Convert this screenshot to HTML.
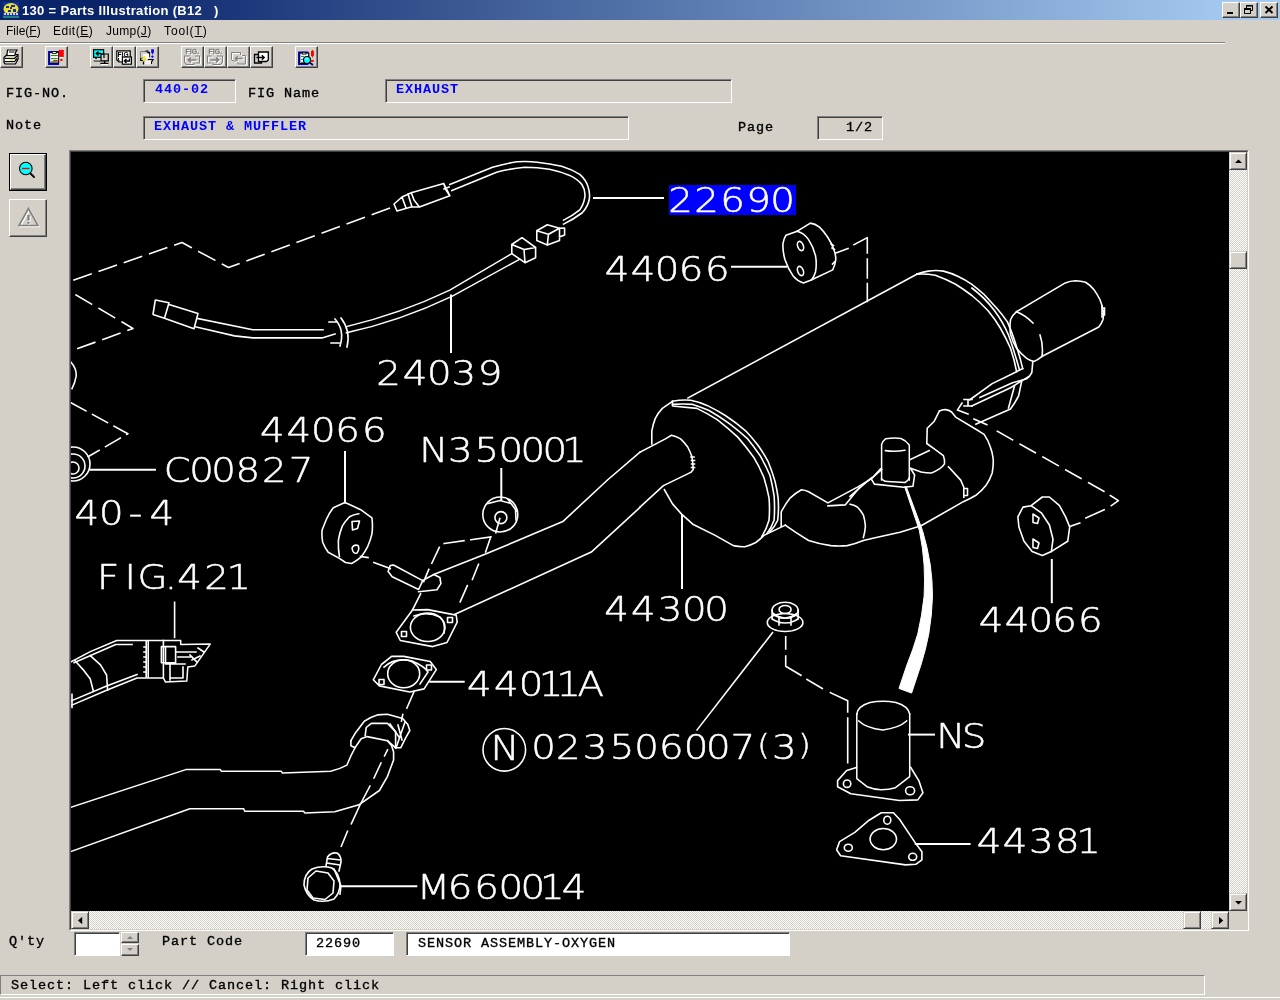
<!DOCTYPE html>
<html lang="en">
<head>
<meta charset="utf-8">
<title>130 = Parts Illustration (B12   )</title>
<style>
html,body{margin:0;padding:0;}
body{width:1280px;height:1000px;overflow:hidden;background:#d4d0c8;position:relative;font-family:"Liberation Sans",sans-serif;font-size:12px;color:#000;}
.abs{position:absolute;}
.lbl,.fld span,.menu,#title .txt,#status span{opacity:0.999;}
.lbl,.fld span,#status span{-webkit-text-stroke:0.35px currentColor;}
.fld.blue span{-webkit-text-stroke:0;}
#title{position:absolute;left:0;top:0;width:1280px;height:20px;background:linear-gradient(to right,#0a246a 0%,#0a246a 8%,#a6caf0 97%,#a6caf0 100%);}
#title .txt{position:absolute;left:22px;top:3px;letter-spacing:0.32px;color:#fff;font-weight:bold;font-size:13px;line-height:16px;white-space:pre;}
.cap{position:absolute;top:2px;width:16px;height:14px;background:#d4d0c8;border:1px solid;border-color:#fff #404040 #404040 #fff;box-shadow:inset -1px -1px 0 #808080;}
.menu{position:absolute;top:23px;font-size:12px;line-height:16px;white-space:pre;}
.menu u{text-decoration:underline;}
#sep1{position:absolute;left:0;top:42px;width:1225px;height:1px;background:#808080;border-bottom:1px solid #fff;}
.tb{position:absolute;top:46px;width:21px;height:20px;background:#d4d0c8;border:1px solid;border-color:#fff #404040 #404040 #fff;box-shadow:inset -1px -1px 0 #808080;}
.tb svg{position:absolute;left:2px;top:2px;overflow:visible;}
.tb.dis{color:#808080;}
.tb.dis svg{filter:drop-shadow(1px 1px 0 #fff);}
.lbl{position:absolute;font-family:"Liberation Mono",monospace;font-size:13.5px;line-height:16px;white-space:pre;letter-spacing:0.9px;}
.fld{position:absolute;box-sizing:border-box;border:1px solid;border-color:#808080 #fff #fff #808080;box-shadow:inset 1px 1px 0 #404040;}
.fld span{position:absolute;font-family:"Liberation Mono",monospace;font-size:13.5px;line-height:16px;white-space:pre;letter-spacing:0.9px;}
.fld.blue span{color:#0000ff;font-weight:bold;}
.fld.white{background:#fff;}
.btn{position:absolute;box-sizing:border-box;background:#d4d0c8;border:1px solid;border-color:#fff #404040 #404040 #fff;box-shadow:inset -1px -1px 0 #808080;}
.dither{background:conic-gradient(#fff 25%,#d4d0c8 0 50%,#fff 0 75%,#d4d0c8 0) 0 0/2px 2px;}
#canvasframe{position:absolute;left:69px;top:150px;width:1180px;height:781px;box-sizing:border-box;border:1px solid;border-color:#808080 #fff #fff #808080;}
#canvasframe .in{position:absolute;left:0;top:0;right:0;bottom:0;border:1px solid;border-color:#404040 #d4d0c8 #d4d0c8 #404040;}
#cv{position:absolute;left:71px;top:152px;width:1158px;height:759px;background:#000;overflow:hidden;}
.sbtn{position:absolute;box-sizing:border-box;width:18px;height:18px;background:#d4d0c8;border:1px solid;border-color:#d4d0c8 #404040 #404040 #d4d0c8;box-shadow:inset 1px 1px 0 #fff,inset -1px -1px 0 #808080;}
.sbtn svg{position:absolute;left:0;top:0;}
#status{position:absolute;left:0;top:975px;width:1205px;height:20px;box-sizing:border-box;border:1px solid;border-color:#808080 #fff #fff #808080;}
#status span{position:absolute;left:10px;top:2px;font-family:"Liberation Mono",monospace;font-size:13.5px;line-height:16px;white-space:pre;letter-spacing:0.9px;}
#botline{position:absolute;left:0;top:997px;width:1280px;height:1px;background:#fff;}
</style>
</head>
<body>
<div id="title">
  <svg class="abs" style="left:3px;top:2px" width="16" height="16" viewBox="0 0 16 16">
    <rect width="16" height="16" fill="#0a30a0"/>
    <rect y="13" width="16" height="3" fill="#208080"/>
    <ellipse cx="8" cy="7" rx="7.5" ry="6" fill="#f0e020"/>
    <path d="M3 4h3v2H3zM8 3h4v2H8zM5 8h3v2H5zM10 7h3v3h-3zM7 5h2v2H7z" fill="#1030b0"/>
    <rect x="0" y="11" width="16" height="3" fill="#1838b0"/>
    <path d="M1 12h2M4 12h2M7 12h2M10 12h2M13 12h2" stroke="#fff" stroke-width="1.4"/>
  </svg>
  <div class="txt">130 = Parts Illustration (B12   )</div>
  <div class="cap" style="left:1222px"><svg width="16" height="14"><rect x="4" y="9" width="6" height="2" fill="#000"/></svg></div>
  <div class="cap" style="left:1240px"><svg width="16" height="14"><path d="M5.5 2.5h6v5h-6zM5 3h7M3.500 5.500h6v5h-6zM3 6h7" fill="none" stroke="#000" stroke-width="1"/><rect x="4" y="6" width="5" height="4" fill="#d4d0c8"/><path d="M3.500 5.500h6v5h-6zM3 6.500h7" fill="none" stroke="#000"/></svg></div>
  <div class="cap" style="left:1260px"><svg width="16" height="14"><path d="M4.500 3.500l7 6.500M11.500 3.500l-7 6.500" stroke="#000" stroke-width="2"/></svg></div>
</div>

<div class="menu" style="left:6px">File(<u>F</u>)</div>
<div class="menu" style="left:53px;letter-spacing:0.5px">Edit(<u>E</u>)</div>
<div class="menu" style="left:106px;letter-spacing:0.3px">Jump(<u>J</u>)</div>
<div class="menu" style="left:164px;letter-spacing:0.9px">Tool(<u>T</u>)</div>
<div id="sep1"></div>

<!-- TOOLBAR -->
<div id="toolbar">
<!--TOOLBAR-START-->
<div class="tb" style="left:0px"><svg width="16" height="16" viewBox="0 0 16 16">
<path d="M1 8.500L4 5.500H15V10L12.500 15H2L1 13Z" fill="#d4d0c8" stroke="#000" stroke-width="1.200"/>
<path d="M4.500 1H14L12.600 3.200L11.800 6.500H3.900Z" fill="#fff" stroke="#000" stroke-width="1.200"/>
<path d="M6 3H11.500" stroke="#000" stroke-width="1"/>
<path d="M1.500 9.500H11.500L14.500 6.500M1.500 12.500H11.500L14 9.500" stroke="#000" stroke-width="1.200" fill="none"/>
<rect x="2" y="10.200" width="9.500" height="1.800" fill="#fff"/>
<path d="M7.500 10L8.800 11.200L10 10" stroke="#e8e000" stroke-width="1.200" fill="none"/>
</svg></div>
<div class="tb" style="left:45px"><svg width="16" height="16" viewBox="0 0 16 16">
<rect x="0" y="2" width="11" height="14" fill="#0000ff"/>
<rect x="1.700" y="3.400" width="9" height="10.600" fill="#fff" stroke="#000" stroke-width="1"/>
<rect x="4.200" y="2.500" width="4" height="1.900" fill="#fff" stroke="#000" stroke-width="0.800"/>
<path d="M3 6.600H9.800M3 9.700H9.800M3 12.800H9.800" stroke="#008000" stroke-width="1"/>
<path d="M5.200 11.600H9.800" stroke="#ff0000" stroke-width="1"/>
<rect x="10.800" y="0.900" width="5" height="7" fill="#ff0000"/>
<path d="M11.500 7.900H15L14 10H12.500Z" fill="#fff"/>
<rect x="12.300" y="9.800" width="2.200" height="2.200" fill="#ff0000"/>
</svg></div>
<div class="tb" style="left:90px"><svg width="16" height="16" viewBox="0 0 16 16">
<rect x="0.600" y="0.700" width="10" height="7.600" fill="#00ffff" stroke="#000" stroke-width="1.200"/>
<path d="M8 4.500H3.500M5.500 2.500L3.300 4.500L5.500 6.500" stroke="#000" stroke-width="1.400" fill="none"/>
<path d="M3 8.500V10.500M0.800 11.800H7.500" stroke="#000" stroke-width="1.400" fill="none"/>
<rect x="1" y="10.500" width="6.500" height="1" fill="#fff"/>
<path d="M8 11.500V5H15.300V11.800H8Z" fill="#d4d0c8" stroke="#000" stroke-width="1.200"/>
<path d="M8 5H11V9" stroke="#000" stroke-width="1.200" fill="none"/>
<path d="M11.600 12V14M7.300 14.500H15.500" stroke="#000" stroke-width="1.400"/>
<rect x="8" y="15" width="7" height="1" fill="#fff"/>
</svg></div>
<div class="tb" style="left:113px"><svg width="16" height="16" viewBox="0 0 16 16">
<path d="M0.800 1.800H14.200V11L12 13H3L0.800 11Z" fill="#fff" stroke="#000" stroke-width="1.200"/>
<text opacity="0.999" x="1.600" y="7.600" font-family="'Liberation Sans',sans-serif" font-weight="bold" font-size="6.500" textLength="11" lengthAdjust="spacingAndGlyphs" fill="#000">FIG</text>
<path d="M2.500 9V11L4 12.500" stroke="#000" stroke-width="1" fill="none"/>
<rect x="6.400" y="8" width="9" height="7.200" fill="#fff" stroke="#000" stroke-width="1.200"/>
<path d="M13.500 9.500V12H8.500M10.500 10L8.300 12L10.500 14" stroke="#000" stroke-width="1.300" fill="none"/>
</svg></div>
<div class="tb" style="left:136px"><svg width="16" height="16" viewBox="0 0 16 16">
<path d="M1.500 2.500H8V3.500H10V9H1.500Z" fill="#d4d0c8" stroke="#808080" stroke-width="1"/>
<path d="M6.500 2H9V3.500H10.500V8" stroke="#000" stroke-width="1.100" fill="none"/>
<rect x="4.200" y="5" width="6" height="5" fill="#fff"/>
<path d="M1.700 9V11.500H4.500V15.500M9 10.500H13.500M14.500 10L12.500 13V15" stroke="#000" stroke-width="1.200" fill="none"/>
<path d="M4.500 8H6.500M5 9.500H7M4.500 8V12.500" stroke="#f0f000" stroke-width="1.400" fill="none"/>
<rect x="6" y="11.500" width="6" height="4" fill="#f4f2ee"/>
<rect x="12.200" y="0.300" width="2.700" height="3.600" fill="#0000ff"/><path d="M13.500 3.800V5.200" stroke="#0000ff" stroke-width="1.200"/>
<path d="M13.400 6.200L14.800 7.600L13.400 9L12 7.600Z" fill="#0000ff"/>
</svg></div>
<div class="tb dis" style="left:181px"><svg width="16" height="16" viewBox="0 0 16 16">
<text opacity="0.999" x="1.500" y="5" font-family="'Liberation Sans',sans-serif" font-weight="bold" font-size="6.800" textLength="13.500" lengthAdjust="spacingAndGlyphs" stroke="currentColor" stroke-width="0.300" fill="currentColor">FIG.</text>
<path d="M11 7H15.500V14H11.500M6 7H0.500V13L2.500 15.500H10V13.500" fill="none" stroke="currentColor" stroke-width="1.100"/>
<path d="M12.500 11H4.500M7 8.600L4.300 11L7 13.400" fill="none" stroke="currentColor" stroke-width="1.500"/>
</svg></div>
<div class="tb dis" style="left:204px"><svg width="16" height="16" viewBox="0 0 16 16">
<text opacity="0.999" x="1.500" y="5" font-family="'Liberation Sans',sans-serif" font-weight="bold" font-size="6.800" textLength="13.500" lengthAdjust="spacingAndGlyphs" stroke="currentColor" stroke-width="0.300" fill="currentColor">FIG.</text>
<path d="M5 7H0.500V14H4.500M10 7H15.500V13L13.500 15.500H6V13.500" fill="none" stroke="currentColor" stroke-width="1.100"/>
<path d="M3.500 11H11.500M9 8.600L11.700 11L9 13.400" fill="none" stroke="currentColor" stroke-width="1.500"/>
</svg></div>
<div class="tb dis" style="left:227px"><svg width="16" height="16" viewBox="0 0 16 16">
<path d="M1.500 3.500H10.500V6M1.500 3.500V10.500L3 12H6.500M12 6.500H15.500V15H8V13" fill="none" stroke="currentColor" stroke-width="1"/>
<path d="M12.500 9.500H5.500M7.700 7.300L5.300 9.500L7.700 11.700" fill="none" stroke="currentColor" stroke-width="1.300"/>
</svg></div>
<div class="tb" style="left:250px"><svg width="16" height="16" viewBox="0 0 16 16">
<path d="M5.500 3H15.300V11L13.500 12.500H5.500Z" fill="#fff" stroke="#000" stroke-width="1.300"/>
<path d="M5.500 5.500H1.500V14H8.500V12.500" fill="none" stroke="#000" stroke-width="1.300"/>
<path d="M3.500 8.500H11M8.800 6.300L11.200 8.500L8.800 10.700" fill="none" stroke="#000" stroke-width="1.400"/>
</svg></div>
<div class="tb" style="left:295px"><svg width="16" height="16" viewBox="0 0 16 16">
<rect x="0" y="2.500" width="10.300" height="13.500" fill="#0000ff"/>
<rect x="1.700" y="4" width="9" height="10.500" fill="#fff" stroke="#000" stroke-width="1.200"/>
<rect x="4.300" y="3.300" width="3.600" height="1.800" fill="#fff" stroke="#000" stroke-width="0.900"/>
<path d="M3 7.400H6M3 10.400H5M3 13.400H6" stroke="#008080" stroke-width="1"/>
<circle cx="9" cy="11" r="3.500" fill="#00ffff" stroke="#000" stroke-width="1.100"/>
<path d="M7.500 9.800H10" stroke="#fff" stroke-width="1"/>
<path d="M11.500 13.500L15 16" stroke="#000080" stroke-width="2"/>
<path d="M14.400 1V8.500" stroke="#ff0000" stroke-width="1"/><rect x="13" y="2" width="2.900" height="5" fill="#ff0000"/>
<rect x="12.500" y="11" width="3.300" height="1.800" fill="#ff0000"/>
</svg></div>

<!--TOOLBAR-END-->
</div>

<!-- FIELDS -->
<div class="lbl" style="left:6px;top:86px">FIG-NO.</div>
<div class="fld blue" style="left:143px;top:79px;width:93px;height:24px"><span style="left:11px;top:2px">440-02</span></div>
<div class="lbl" style="left:248px;top:86px">FIG Name</div>
<div class="fld blue" style="left:385px;top:79px;width:347px;height:24px"><span style="left:10px;top:2px">EXHAUST</span></div>
<div class="lbl" style="left:6px;top:118px">Note</div>
<div class="fld blue" style="left:143px;top:116px;width:486px;height:24px"><span style="left:10px;top:2px">EXHAUST &amp; MUFFLER</span></div>
<div class="lbl" style="left:738px;top:120px">Page</div>
<div class="fld" style="left:817px;top:116px;width:66px;height:24px"><span style="left:28px;top:3px">1/2</span></div>

<!-- LEFT BUTTONS -->
<div id="leftbtns">
<!--LEFT-START-->
<div class="abs" style="left:9px;top:153px;width:38px;height:38px;box-sizing:border-box;border:1px solid #000;background:#d4d0c8">
<div class="abs" style="left:0;top:0;right:0;bottom:0;border:1px solid;border-color:#fff #404040 #404040 #fff;box-shadow:inset -1px -1px 0 #808080"></div>
<svg class="abs" style="left:7px;top:7px" width="22" height="20" viewBox="0 0 22 20">
<path d="M12.500 11.500L17 16" stroke="#000" stroke-width="1.800" stroke-linecap="round"/>
<circle cx="8.800" cy="7.500" r="6.300" fill="#00ffff" stroke="#000" stroke-width="1.100"/>
<path d="M5 7.500H12.500" stroke="#ff0000" stroke-width="1.400"/>
</svg>
</div>
<div class="btn" style="left:9px;top:199px;width:38px;height:38px">
<svg class="abs" style="left:7px;top:7px;filter:drop-shadow(1px 1px 0 #fff)" width="24" height="22" viewBox="0 0 24 22">
<path d="M11.500 1.500L21 18.500H2Z" fill="none" stroke="#808080" stroke-width="1.600" stroke-linejoin="miter"/>
<path d="M11.500 8V13.500M11.500 15V16.800" stroke="#808080" stroke-width="2.200"/>
</svg>
</div>

<!--LEFT-END-->
</div>

<!-- CANVAS -->
<div id="canvasframe"><div class="in"></div></div>
<div id="cv">
<svg id="draw" width="1158" height="759" viewBox="71 152 1158 759" style="position:absolute;left:0;top:0" fill="none" stroke="#fff" stroke-width="1.6" stroke-linecap="square" stroke-linejoin="round">
<!--DRAW-START-->
<!-- top-left dashed outlines -->
<g stroke-dasharray="18 8.700">
<polyline points="74,280 182,242.5 228.5,267.5 393,207"/>
<polyline points="76,295 133,328.5 71,351"/>
</g>
<!-- 24039 cable connector -->
<path d="M155.300 300L169 302.700L164.500 318.200L153 314.500ZM169 304.400L198 313.500L194 328.800L164.500 318.200"/>
<path d="M198 318.600L252.800 329.800L323 329.800M195 326.700L234.500 335.900L252.800 337.900L322 337.900L335 334" stroke-width="1.6"/>
<!-- clip -->
<path d="M335 319Q345 330 340 346M341 318Q351 331 347 347M329 322L337 322M331 343L339 343"/>
<!-- cable to box2 -->
<path d="M346.300 326.700Q400 314 449.800 290.200L511.800 253.600M346.300 332.800Q400 321 451.900 296.300L518.900 259.700" stroke-width="1.4"/>
<!-- leader 24039 -->
<path d="M451 295.500V352" stroke-width="2"/>
<!-- sensor 22690 body -->
<path d="M394 204L397 211L411 207L419.400 206.900L449.800 195.700L443.700 183.500L411.300 192.700L402 197ZM402 197L406 208M408 194L412 207M411.300 192.700L414 200L419.400 206.900M443.700 183.500L446 190L449.800 195.700M444 189L449 187"/>
<!-- sensor wire loop -->
<path d="M449.800 184.500L492.500 167.300Q505 163.500 516.900 161.800Q527 161 537.200 162.200Q550 163.500 561.600 166.300Q572 169.500 579.800 174.400Q586 180 588 186.600Q590.500 194 589 200.800Q587 208 581.900 213Q574 219 563.600 224.100"/>
<path d="M451.900 190.600L496.600 172.300Q511 168.500 525 167.300Q537 167.300 549.400 169.300Q560 171.500 569.700 175.400Q578 179.500 581.900 184.500Q585.500 190 584.900 196.700Q584 204 579.800 209.900Q573 215.500 563.600 220.100"/>
<!-- connector boxes -->
<path d="M536.800 230.800L547.300 224.700L559.500 228.200L559.500 240.400L547.300 245.100L536.800 240.400ZM548.400 234.300L536.800 230.800M548.400 234.300L559.500 228.200M548.400 234.300L547.300 245.100M559.500 228.200L564.600 228L564.600 235L559.500 237"/>
<path d="M511.800 244.500L522 237.700L535.600 247.500L535.600 257.700L525 262.700L511.800 253.600ZM524 249.500L511.800 244.500M524 249.500L535.600 247.500M524 249.500L525 262.700"/>
<!-- leader 22690 -->
<path d="M594 198H663" stroke-width="2"/>
<!-- leader 44066 top -->
<path d="M732 266.800H786" stroke-width="2"/>
<!-- cushion 1 (top) -->
<path d="M786 235.300L797.200 231.200Q804 233 808.400 239.400Q813.500 247 815.500 255.600Q817 264 815.500 271.900Q814 277 811.400 280L803.300 283Q797.500 281 793.100 275.900Q788 268.500 785 259.700Q782.500 251 783 243.400Q784 238 786 235.300Z"/>
<path d="M797.200 231.200L810.400 223.100Q815 223.500 819.500 227.200Q824 231.500 827.700 237.300Q831.500 243 833.800 249.500Q835.800 254.500 835.800 259.700Q835 265.500 832.700 269.900L811.400 280"/>
<ellipse cx="800.500" cy="246" rx="2.800" ry="4.800" transform="rotate(-20 800.500 246)"/>
<ellipse cx="800.500" cy="271" rx="2.800" ry="4.800" transform="rotate(-20 800.500 271)"/>
<path d="M831 244L833.500 245.500M832 248L834.500 249.500M832.500 264L834.500 262"/>
<path d="M836 253L848 248.500M854 244.700L867.300 237.600V253"/>
<path d="M867.300 259V278M867.300 283.500V301.500"/>
<!-- muffler top edge -->
<path d="M688 398L917 274.100"/>
<!-- muffler rear arcs -->
<path d="M917 274.100Q922 272 928.200 271.100Q936 270 943.400 271.100Q951 273 957.700 276.200Q965 279.500 971.900 284.300Q978 289 984.100 294.500L996.300 307.700Q1002 314 1007.400 321.900Q1011.500 331 1014.500 340.200L1019.600 356.400L1022.700 368.600"/>
<path d="M917 274.100Q926 273.500 935.300 275.200Q946 279 955.600 284.300Q964 289.500 971.900 295.500Q980.500 302.500 988.100 310.700Q995 319 1000.300 328Q1006 338 1010.500 348.300Q1014.500 360 1016.600 371.600"/>
<path d="M971.900 288Q985 298 994 310Q1003 322 1008.500 335Q1014 350 1019.500 370"/>
<!-- tail pipe -->
<path d="M1016.600 311.700L1065.300 282.900Q1070 281 1075.500 280.800Q1081 281 1085.600 282.300Q1090 285 1093.800 289.400Q1097 294 1099.900 299.500Q1102 304.500 1102.900 309.700Q1104 315 1102.900 319.800Q1101.500 324 1098.800 327L1042 356.400"/>
<path d="M1016.600 311.700Q1012.500 315 1010.500 319.800Q1009.500 327 1010.500 334.100Q1012.500 341.500 1016.600 348.300Q1021 354 1026.700 358.400Q1030 360.500 1033.800 361.500Q1038 360 1042 356.400"/>
<path d="M1016.600 311.700Q1025 315 1033 323M1040 335Q1043.500 345 1042 356.400"/>
<path d="M1102 306V317M1104.500 308V315M1102 308H1104.500M1102 311H1104.500M1102 314H1104.500"/>
<!-- hanger below tail pipe -->
<path d="M1032.800 361.500L1031.800 372.700Q1030 376.500 1026.700 378.800L1012.500 382.800L980 397.500"/>
<path d="M1022.700 368.600L1014.500 372.700L992.200 383.600L969.800 399.800"/>
<path d="M1028.700 376.500L1010.500 387.700L971.900 405.900"/>
<path d="M1021.600 381.600L1018.600 395.800Q1015 403 1010.500 409L975.900 424.200"/>
<path d="M1014.500 386L1008.500 408"/>
<path d="M964 399.500H972M968 399.500V406M964 406H972M957.500 410L968 414M962 403L957.500 410"/>
<path d="M974 419L990 426" stroke-dasharray="14 7"/>
<!-- dashed to right cushion -->
<path d="M997.300 431.300L1104 491.400" stroke-dasharray="17.500 8.700"/>
<!-- second chamber body -->
<path d="M939.400 411Q942 409.500 945.500 409.600Q949 410 951.600 412L955.600 417.100L975.900 429.300L984.100 434.400Q988 440 990.200 446.600Q992.500 452.500 993.200 458.800Q993.500 466 992.200 473Q990 479.500 986.100 485.200Q981.500 491 975.900 495.300Q970 499 963.800 501.400L921.100 525.800L900 532.300L874 538L863.400 540.500Q855 544 847.200 545.600Q839 546.500 830.900 545.600Q819 544 808.600 540.500Q796 533 785.200 525.200"/>
<!-- second chamber left side -->
<path d="M939.400 411L934.300 421.200L927.200 428.300L926.800 443.500L935.300 449.600L943.400 455.700Q945 460 944.500 463.800Q942.500 467 939.400 468.900Q935.500 471.500 931.300 473Q926 473 921.100 472L909.900 467.900M909.900 459.800L929.200 450.600"/>
<path d="M948.500 466.900L960.700 480.100L963.800 487.200L963.800 497.300M963.800 488.500H967.500V495.500H963.800"/>
<!-- sensor boss -->
<path d="M881.600 480V444.500Q882.500 441 885.500 438.800Q895 437.500 901 438.500Q906 440.500 909.300 445V480" stroke-width="1.5"/>
<path d="M885.500 450.600Q895 452 904.800 450.200M881.600 479Q884 481.500 887.500 481.500L905 482.500Q908 481 909.300 478"/>
<path d="M880.500 468.900L871.300 479L874.400 484.100L903.800 487.200L913 486.200L914.600 475L910.900 468.900"/>
<path d="M871.300 478L850 496.300"/>
<!-- thick sensor cable -->
<path d="M904.800 487.200L919.400 530.600Q923 548 924.100 565Q925 581 924.100 596.300Q922 616 917.800 633.800Q913 650 906.900 665L899 688.400L911.600 693.100L920.900 665Q926 649 928.800 633.800Q932 615 932.500 596.300Q932.500 580 930.300 565Q927.500 547 922.500 530.600L906.500 487.200Z" fill="#fff" stroke-width="1"/>
<!-- muffler front face -->
<path d="M672.500 401.300L662.300 408.400Q658 413 655.200 418.600Q653 424.500 651.800 430.800L651.800 444"/>
<path d="M664.400 489.700L672.500 503.900L681.600 514.100L692.800 524.200L715.200 535.400L733.400 545.600Q739.500 547 745.600 546.600Q751 545 755.800 542.500Q760 539.500 763.900 535.400L785.200 525.200"/>
<path d="M672.500 401.300Q682 399.500 690.800 400.300Q699 402 707 405.400Q716.500 410 725.300 415.500Q736 422.500 745.600 430.800Q752 437.500 757.800 445Q763.500 453 768 461.300Q772 471 775.100 481.600Q777 489.500 778.100 497.800Q779 509 777.700 520.200Q775 526.500 770 531.300"/>
<path d="M672.500 404.400Q683 403.500 692.800 404.400Q701 407 709.100 410.500Q719.500 416.500 729.400 423.700Q739 431 747.700 438.900Q754 446.500 759.800 455.200Q765.500 465 770 475.500Q772.500 485.500 774.100 495.800Q775 508 774.100 520.200Q771.500 527.500 767 533.400"/>
<path d="M672.500 401.300V406L696.900 408.400Q707.500 413.500 717.200 419.600Q728 428 737.500 436.900Q746 446.500 753.700 457.200Q759.500 467 763.900 477.500Q767 487.500 769 497.800Q770 509 769 520.200Q766.500 529 761.900 536.400"/>
<!-- inlet pipe into muffler -->
<path d="M640 452.100L665.400 438.900L671.500 435.300Q676.500 436.500 680.600 438.900Q684.500 442.500 687.700 447Q690 451.500 691.800 456.200Q693 463 693.200 469.400L690.800 472.400L663.400 485.600L640 507"/>
<path d="M691 457H694M691.500 460.500H694.500M691.500 464H694.500M691.500 467.500H694.500"/>
<!-- leader 44300 -->
<path d="M682 515V588" stroke-width="2"/>
<!-- elbow pipe -->
<path d="M781.200 526.300L781.200 512Q785 504.500 790.300 497.800Q795.500 493 801.500 489.700Q805 490 808.600 491.700L827.900 502.900L858.400 486.600L871.600 478.500L881.700 469.400"/>
<path d="M827.900 505.900L845.200 504.900L859.400 487.700"/>
<path d="M850.200 504.300Q854 505 857.300 507Q861 510.500 863.400 515.100Q865 520.500 865.400 526.300Q865 532 863.400 537.400"/>
<!-- leaders -->
<path d="M345 452V502.500M501.300 469V499.500" stroke-width="2"/>
<!-- cushion 2 (left) -->
<path d="M344.900 502.600L333.300 507.700Q329 513 326.200 519.800L322.100 530Q321.500 536 322.700 542.200Q325 548 328.200 552.300L339.400 558.400L345.500 562.500L351.600 563.500Q356.500 561 360.700 557.400Q365 552 367.800 546.300Q370.500 540 371.900 534.100Q373 526 371.900 517.800L360.700 509.700L349.500 504.600Z"/>
<path d="M358.700 513.800Q353.500 514.500 349.500 516.800Q345.500 521 342.400 525.900Q339.500 533 338.400 540.200Q338 548.500 339.400 556.400"/>
<path d="M352 521.500L359.500 521L357.500 528.500L352.500 530ZM352 548Q354 544 358 545.500Q360 549 357 553Q353 554.500 352 548Z"/>
<path d="M360.500 556.500L368 557.500"/>
<!-- stay rod -->
<path d="M373.900 562.500L390.200 568.600M390.200 565.500L393.500 565L422.700 580.600L418.600 589.500L392.200 576.700L388.100 571.600Z"/>
<!-- flange ear -->
<path d="M422.700 580.500L433.800 574.500L439.900 577.500L440.900 583.600L436.900 589.700L418.600 591.700M428.800 569.400L423.700 581.600M420.600 593.800L412.500 610"/>
<!-- nut N350001 -->
<circle cx="500.300" cy="514.500" r="17.500"/>
<path d="M488 503.500L500 500.500L511 503.500L517 511M508 499.500L515.500 509.500L516 520"/>
<circle cx="500.900" cy="517.600" r="6"/>
<path d="M499.800 518.600L495.800 532.800"/>
<!-- dashed near nut -->
<path d="M490.700 536.900L440.900 544L431.800 563.300" stroke-dasharray="20 7"/>
<path d="M490.700 536.900L485.600 552.100M478.500 564.300L472.400 579.500M467.300 585.600L460.200 601.900"/>
<!-- front pipe -->
<path d="M640 452.100L607.500 480L562.800 521.600L485.600 554.100L433.800 574.500"/>
<path d="M640 507.400L591.300 552.100L455.200 614.100"/>
<!-- flange 1 -->
<path d="M412.500 610L427.700 609.600L456.200 615.100L457.200 622.200L447 642.500L432.800 646.600L400.300 640.500L396.200 632.300Z"/>
<ellipse cx="427.700" cy="627.300" rx="17.300" ry="14.200"/>
<path d="M414 616Q427 611 440 617Q446 623 444 633"/>
<rect x="401.500" y="631.500" width="5" height="5"/><rect x="447.500" y="617.500" width="5" height="5"/>
<!-- gasket 44011A -->
<path d="M391.600 656.400L403.700 656.400L430.200 661.500L436.300 669.600L424.100 688.900L409.800 692L379.400 685.900L373.300 679.800L381.400 664.500Z"/>
<ellipse cx="403.700" cy="673.700" rx="16" ry="14"/>
<path d="M384 667Q395 657 412 661Q424 666 428 672L420 684"/>
<rect x="426.500" y="665" width="5" height="5"/><rect x="379" y="679.500" width="5" height="5"/>
<path d="M430.200 681.800H463.700" stroke-width="2"/>
<path d="M413.900 692L406.800 708.200M402.700 714.500L401.500 721"/>
<!-- lower pipe flange/bend -->
<path d="M350.900 740.700L355 733.600L364.100 721.400Q370 717 377.300 714.900L387.500 714.300L402.700 718.400L407.800 724.500L409.800 730.500L405.800 737.700L400.700 747.800L395.600 747.800"/>
<path d="M365.200 735.600L366.200 727.500L371.300 723.400L387.500 723.400L395.600 731.600L395.600 747.800L387.500 740.700"/>
<path d="M350.900 740.700L350.900 745.800L355 747.800L361.100 738.700L367.200 736.600L387.500 740.700L391.600 745.800L393.600 751.900L393.600 760L387.500 776.300L379.400 790.500L359.100 804.700"/>
<path d="M355 747.800L350.900 755.900L346.900 765.100Q340 769 330.600 771.200L282.300 773L281.300 771.200L221.300 771.200L220.300 769.600L185.800 769.600L71 807.200" stroke-width="1.500"/>
<path d="M359.100 804.700L334.700 811.800L304.600 812.900L303.600 811.200L244.700 811.200L243.700 808.800L189.800 808.800L71 851.500" stroke-width="1.500"/>
<path d="M398 725L402 740M390 724L399 737M405 722L396 748"/>
<path d="M387.500 749.800L384.500 756M381 763L374 778M370 786L360 805L351.300 823.800M347.500 831.300L341.300 846.300"/>
<!-- bolt M660014 -->
<path d="M304 885Q304 874 312 869Q322 865 332 868Q339 873 340 884Q340 893 334 899Q324 903 314 900Q306 895 304 885Z"/>
<path d="M308 878L316 871L328 873L334 881L333 893L325 899.500L313 898L307 890Z"/>
<path d="M326 866L327.500 857Q331 852 337 853Q341.500 856 341 862L339 871M328 858.500L340.500 860M327 863L340 865M334 869L341 886L340 894"/>
<path d="M340 886.300H416.300" stroke-width="2"/>
<!-- left dashed + arc + bolt C00827 -->
<path d="M71 402.800L127.900 433.700L88.300 456.600" stroke-dasharray="17 7.500"/>
<path d="M71 362.200Q77 369 76.100 376.400Q75 383 72 388.600"/>
<circle cx="73" cy="464" r="17"/><circle cx="73" cy="466" r="12"/><circle cx="73" cy="468" r="6"/>
<path d="M90.300 469.800H154.900" stroke-width="2"/>
<!-- FIG.421 piece -->
<path d="M174.600 602.300V637.400"/>
<path d="M71 661.800L90.300 651.600L116.700 640.500L180.700 640.500L180.700 644.500L210.200 644.100L194.900 665.900L187.800 666.900L186.800 681.100L165.500 682.100L163.400 678L137 678L106.600 690.200L71 705.500" stroke-width="1.500"/>
<path d="M74.100 662.800L115.700 644.500L132 644.500M71 701L106.600 686L137 674.500"/>
<path d="M146.200 641.500V677M148.200 641.500V677M163.400 640.500V678M144 647H146M144 652H146M144 657H146M144 662H146M144 667H146M144 672H146"/>
<path d="M161.400 646.600H175.600V662.800H161.400ZM165.500 648V664M165.500 664H185M170 664V680M183 667V678H170M176 652H196M178 657H192M198 648L204 652M192 660L200 656M190 655L197 662"/>
<path d="M75.100 660.800L84.200 670.900L90.300 679.100L93.400 691.300M90.300 655.700L100.500 664.800L106.600 675L107.600 690.200M72 694.300V707.500"/>
<!-- flange nut 023506007 -->
<ellipse cx="785.100" cy="610.300" rx="13" ry="8"/>
<ellipse cx="785.100" cy="609.500" rx="6" ry="4"/>
<ellipse cx="785.100" cy="622.500" rx="17.800" ry="9"/>
<path d="M772.100 610.300V619M798.100 610.300V619M772.100 619Q785 627 798.100 619M779 617V625M791 617V625M774 614Q785 622 796 614"/>
<path d="M772.500 632.700L697 730"/>
<path d="M785.700 636.700V648.900M785.700 656V666.200L800.900 675.300M807 679.400L822.300 688.500M830.400 692.600L847.700 700.700V711.900M847.700 718V762.700"/>
<!-- NS cylinder -->
<path d="M856.800 714Q858 706 870 702.500Q882.800 700 896 702.500Q908 706 909.700 714M858.800 721Q866 728 882.800 730Q899 728 906.600 721"/>
<path d="M856.800 714V778.600L867 786.700Q874 789.500 881.300 789.800Q889 789.500 895.500 787.700L909.700 776.600V714" stroke-width="1.500"/>
<path d="M856.500 767.400L846.700 770.500L837.600 780.600L837.600 786.700L850.800 793.800L899.500 800.500L917.800 799.900L922.900 792.800L918.800 780.600L910.700 767.400"/>
<circle cx="847.100" cy="783.700" r="3.700"/><ellipse cx="910.100" cy="790.800" rx="4.500" ry="4"/>
<path d="M909 734.600H934" stroke-width="2"/>
<!-- gasket 44381 -->
<path d="M881.300 812.700L893.400 812.700L899.500 819.200L915.800 843.600L921.900 851.700L921.900 859.800L915.800 864.300L905.600 864.900L840.600 855.800L836.600 849.700L839.600 841.600L854.800 832.400L869.100 820.200Z"/>
<ellipse cx="883.300" cy="839.100" rx="13.200" ry="10.600"/>
<ellipse cx="887.300" cy="820.200" rx="3.500" ry="4"/><ellipse cx="848.300" cy="847.700" rx="4" ry="3.500"/><ellipse cx="912.700" cy="856.800" rx="4" ry="3.500"/>
<path d="M915.800 844H969.600" stroke-width="2"/>
<!-- cushion 3 (right) -->
<path d="M1023 507.100L1031.100 505.700L1041.300 512.800L1049.400 525L1053 539.200L1051.400 551.400L1042.300 555.500L1032.100 551.400L1024 541.300L1018.900 527L1017.900 516.900Z"/>
<path d="M1031.100 505.700L1042.300 497L1049.400 497L1059.500 505.700L1065.600 516.900L1069.700 527L1067.700 541.300L1051.400 551.400"/>
<path d="M1033 514L1039 518L1037.500 523.500L1033 522.500ZM1033 539L1039 543L1037.500 548.500L1033 547.500Z"/>
<path d="M1051.800 560V602.200" stroke-width="2"/>
<path d="M1069.700 526.600L1079.800 523M1085.900 517.900L1104.200 509.800M1110.300 495.500L1118.400 500.600L1111.300 505.700"/>
<rect x="669" y="185" width="127" height="30" fill="#0000ff" stroke="none"/>
<g opacity="0.999" fill="#fff" stroke="#fff" stroke-width="0.5" text-anchor="middle" font-family="'DejaVu Sans',sans-serif" font-weight="200" font-size="34">
<text transform="scale(1.14 1)" x="597.0 619.8 642.7 665.5 686.4" y="212.0">22690</text>
<text transform="scale(1.14 1)" x="541.3 564.2 585.2 606.2 629.2" y="281.0">44066</text>
<text transform="scale(1.14 1)" x="340.8 364.1 385.4 406.8 430.0" y="385.5">24039</text>
<text transform="scale(1.14 1)" x="238.9 262.2 283.6 305.0 328.3" y="442.0">44066</text>
<text transform="scale(1.14 1)" x="380.5 403.7 427.0 448.2 467.5 486.8 503.9" y="462.0">N350001</text>
<text transform="scale(1.14 1)" x="155.5 176.8 196.1 217.4 240.7 264.0" y="481.6">C00827</text>
<text transform="scale(1.14 1)" x="76.2 97.6 118.8 142.0" y="524.7">40-4</text>
<text transform="scale(1.14 1)" x="94.9 114.3 133.7 150.0 166.4 190.0 209.4" y="588.7">FIG.421</text>
<text transform="scale(1.14 1)" x="540.9 564.3 587.7 609.1 628.5" y="621.0">44300</text>
<text transform="scale(1.14 1)" x="420.5 444.2 465.9 483.4 498.8 518.3" y="696.0">44011A</text>
<text transform="scale(1.14 1)" x="442.9" y="760.0">N</text>
<text transform="scale(1.14 1)" x="476.8 498.5 522.0 545.6 567.2 588.9 610.5 630.1 651.7 669.8 687.9 705.6" y="758.8">023506007<tspan font-size="28" dy="-3.3">(</tspan><tspan dy="3.3">3</tspan><tspan font-size="28" dy="-3.3">)</tspan></text>
<text transform="scale(1.14 1)" x="834.1 854.4" y="748.4">NS</text>
<text transform="scale(1.14 1)" x="867.6 890.5 913.4 936.3 955.0" y="853.0">44381</text>
<text transform="scale(1.14 1)" x="380.3 403.6 426.8 448.1 467.4 484.5 503.6" y="898.8">M660014</text>
<text transform="scale(1.14 1)" x="869.3 892.1 912.9 933.8 956.5" y="631.6">44066</text>
</g>
<circle cx="504.300" cy="749.800" r="21.300"/>

<!--DRAW-END-->
</svg>
</div>

<!-- SCROLLBARS -->
<div class="abs dither" style="left:1229px;top:152px;width:18px;height:759px"></div>
<div class="abs dither" style="left:71px;top:911px;width:1158px;height:18px"></div>
<div class="sbtn" style="left:1229px;top:152px"><svg width="18" height="18"><path d="M5 10h7L8.500 6.500z" fill="#000"/></svg></div>
<div class="sbtn" style="left:1229px;top:893px"><svg width="18" height="18"><path d="M5 7h7L8.500 10.500z" fill="#000"/></svg></div>
<div class="sbtn" style="left:1229px;top:251px"></div>
<div class="sbtn" style="left:71px;top:911px"><svg width="18" height="18"><path d="M10.200 4.800v7.400L6 8.500z" fill="#000"/></svg></div>
<div class="sbtn" style="left:1211px;top:911px"><svg width="18" height="18"><path d="M7 4.800v7.400L11.200 8.500z" fill="#000"/></svg></div>
<div class="sbtn" style="left:1183px;top:911px"></div>

<!-- BOTTOM -->
<div class="lbl" style="left:9px;top:934px">Q'ty</div>
<div class="fld white" style="left:74px;top:932px;width:46px;height:24px"></div>
<div class="btn" style="left:121px;top:932px;width:18px;height:11px"><svg class="abs" style="left:0;top:0" width="16" height="9"><path d="M5 6h6L8 3z" fill="#808080"/></svg></div>
<div class="btn" style="left:121px;top:944px;width:18px;height:12px"><svg class="abs" style="left:0;top:0" width="16" height="10"><path d="M5 3h6L8 6z" fill="#808080"/></svg></div>
<div class="lbl" style="left:162px;top:934px">Part Code</div>
<div class="fld white" style="left:305px;top:932px;width:89px;height:24px"><span style="left:10px;top:3px">22690</span></div>
<div class="fld white" style="left:406px;top:932px;width:384px;height:24px"><span style="left:11px;top:3px">SENSOR ASSEMBLY-OXYGEN</span></div>

<div id="status"><span>Select: Left click // Cancel: Right click</span></div>
<div id="botline"></div>
</body>
</html>
